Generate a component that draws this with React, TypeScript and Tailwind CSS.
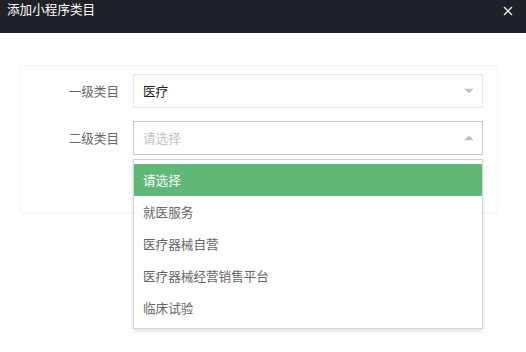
import React from 'react'

const options = ['请选择', '就医服务', '医疗器械自营', '医疗器械经营销售平台', '临床试验']

function Arrow({ up }: { up?: boolean }) {
  return (
    <svg width="10" height="5" viewBox="0 0 10 5" className="absolute right-[8px] top-1/2 -translate-y-1/2">
      {up ? <path d="M0 5 L5 0 L10 5 Z" fill="#c2c2c2" /> : <path d="M0 0 L10 0 L5 5 Z" fill="#c2c2c2" />}
    </svg>
  )
}

export default function App() {
  return (
    <div
      className="w-[526px] h-[352px] bg-white overflow-hidden text-[12.6px]"
      style={{ fontFamily: '"Noto Sans CJK SC", "Noto Sans", sans-serif' }}
    >
      <div className="h-[33px] bg-[#1f2129] flex justify-between px-[7px] pt-[1px]">
        <span className="text-white text-[12.6px] leading-[16px]">添加小程序类目</span>
        <svg width="10" height="10" viewBox="0 0 10 10" className="mt-[5px] mr-[6px]">
          <path d="M1 1 L9 9 M9 1 L1 9" stroke="#e6e6e6" strokeWidth="1.4" />
        </svg>
      </div>

      <div className="mt-[32px] ml-[20px] mr-[28px] border border-[#f5f5f5] rounded-[2px] shadow-[0_1px_2px_rgba(0,0,0,0.03)] pt-[8px] pb-[57px] pr-[14px]">
        <div className="flex items-center">
          <label className="w-[112px] pr-[14px] text-right text-[#666]">一级类目</label>
          <div className="relative flex-1 h-[34px] border border-[#e6e6e6] bg-white flex items-center pl-[9px] text-[#222]">
            医疗
            <Arrow />
          </div>
        </div>

        <div className="flex items-center mt-[13px]">
          <label className="w-[112px] pr-[14px] text-right text-[#666]">二级类目</label>
          <div className="relative flex-1 h-[34px] border border-[#c9c9c9] bg-white flex items-center pl-[9px] text-[#c2c2c2]">
            请选择
            <Arrow up />
            <div className="absolute left-[-1px] right-[-1px] top-[37px] bg-white border border-[#d2d2d2] shadow-[0_2px_4px_rgba(0,0,0,0.12)] py-[4px] z-10">
              {options.map((o, i) => (
                <div
                  key={o}
                  className={
                    i === 0
                      ? 'h-[32px] flex items-center pl-[9px] bg-[#5fb878] text-white'
                      : 'h-[32px] flex items-center pl-[9px] text-[#666]'
                  }
                >
                  {o}
                </div>
              ))}
            </div>
          </div>
        </div>
      </div>
    </div>
  )
}
